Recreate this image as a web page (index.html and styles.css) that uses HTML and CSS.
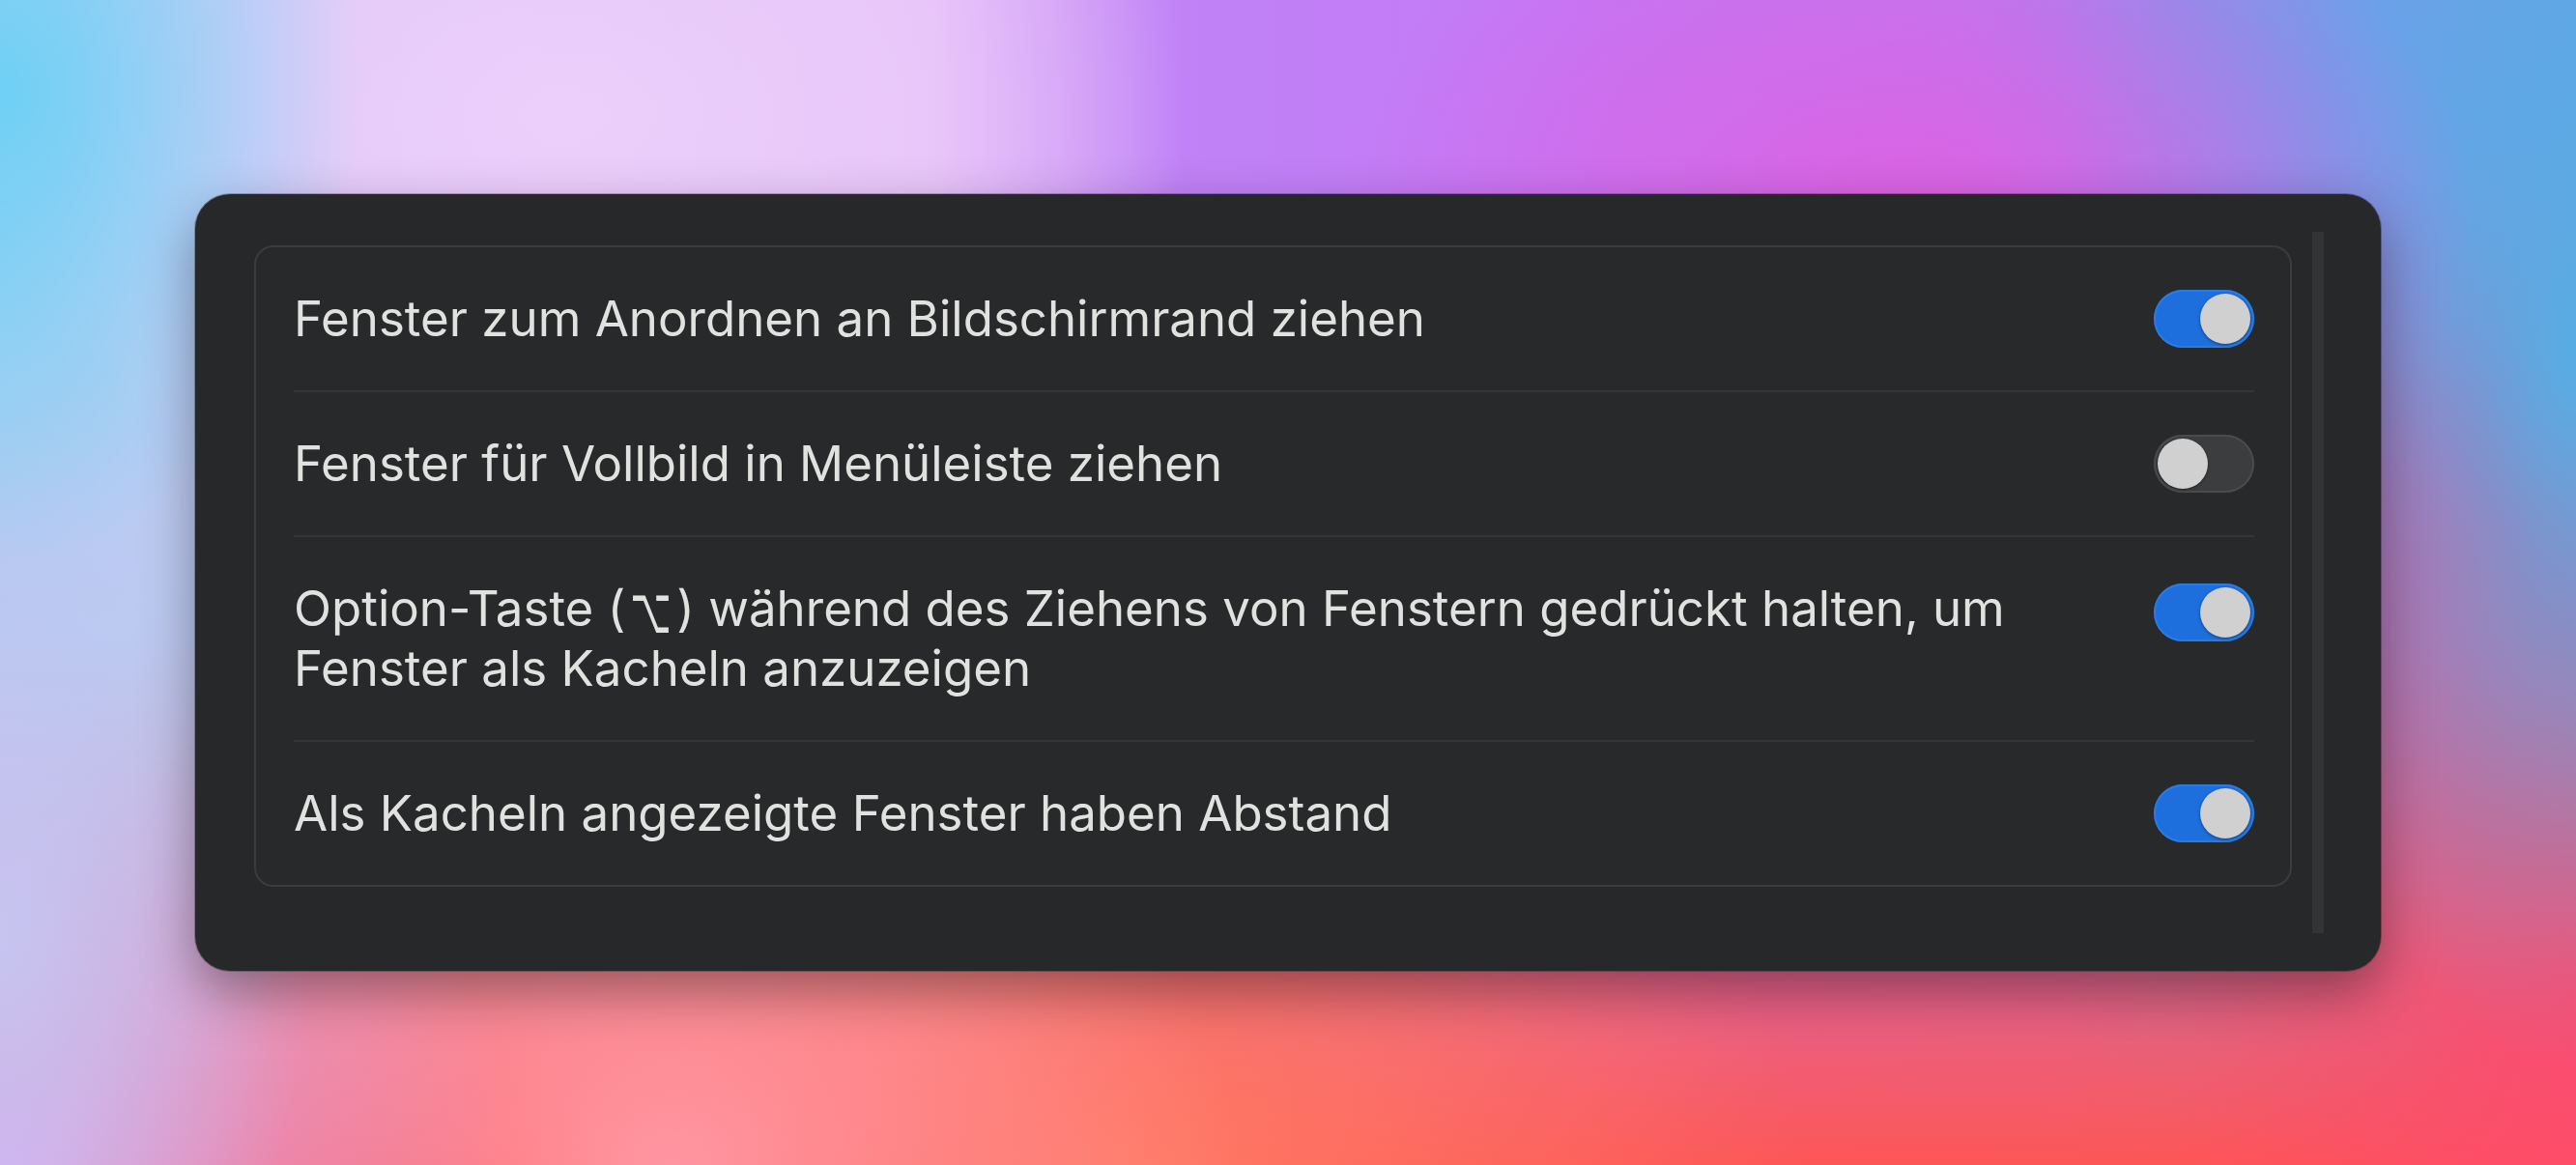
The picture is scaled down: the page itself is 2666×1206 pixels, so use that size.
FILE: index.html
```html
<!DOCTYPE html>
<html lang="de">
<head>
    <meta charset="UTF-8">
    <title>Schreibtisch &amp; Dock</title>
    <link rel="stylesheet" href="styles.css">
</head>
<body>
<div class="window">
    <div class="content">
        <div class="group">
            <div class="row">
                <div class="label">Fenster zum Anordnen an Bildschirmrand ziehen</div>
                <div class="switch on"><div class="knob"></div></div>
            </div>
            <div class="row">
                <div class="label">Fenster für Vollbild in Menüleiste ziehen</div>
                <div class="switch"><div class="knob"></div></div>
            </div>
            <div class="row top">
                <div class="label">Option-Taste (<span class="opt">⌥</span>) während des Ziehens von Fenstern gedrückt halten, um Fenster als Kacheln anzuzeigen</div>
                <div class="switch on"><div class="knob"></div></div>
            </div>
            <div class="row">
                <div class="label">Als Kacheln angezeigte Fenster haben Abstand</div>
                <div class="switch on"><div class="knob"></div></div>
            </div>
        </div>
    </div>
    <div class="track"></div>
</div>
</body>
</html>
```

FILE: styles.css
```css
*{
    margin: 0;
    padding: 0;
    box-sizing: border-box;
}
html, body{
    width: 2666px;
    height: 1206px;
    overflow: hidden;
}
body{
    font-family: Inter, "Noto Sans", "DejaVu Sans", sans-serif;
    padding: 201px 0 0 202px;
    background-color: #f8585e;
    background-image:
        radial-gradient(ellipse 14% 40% at 0% 8%, #6fd0f5 0%, rgba(111,208,245,0) 100%),
        radial-gradient(ellipse 24% 36% at 22% 10%, #edcffb 0%, rgba(237,207,251,0) 100%),
        radial-gradient(ellipse 22% 32% at 74% 18%, #dc62e2 0%, rgba(220,98,226,0) 100%),
        radial-gradient(ellipse 12% 62% at 100% 30%, #56ade4 0%, rgba(86,173,228,0) 100%),
        radial-gradient(ellipse 16% 30% at 92% 4%, #6f9ee8 0%, rgba(111,158,232,0) 100%),
        radial-gradient(ellipse 12% 45% at 0% 80%, #c6c4f0 0%, rgba(198,196,240,0) 100%),
        radial-gradient(ellipse 20% 40% at 0% 100%, #d8a8f2 0%, rgba(216,168,242,0) 100%),
        radial-gradient(ellipse 14% 40% at 0% 60%, #b6c8f0 0%, rgba(182,200,240,0) 100%),
        radial-gradient(ellipse 22% 40% at 26% 100%, #ff96a2 0%, rgba(255,150,162,0) 100%),
        radial-gradient(ellipse 26% 45% at 44% 100%, #ff7a64 0%, rgba(255,122,100,0) 100%),
        radial-gradient(ellipse 16% 55% at 100% 85%, #ff4a6e 0%, rgba(255,74,110,0) 100%),
        radial-gradient(ellipse 16% 35% at 97% 45%, #e2529a 0%, rgba(226,82,154,0) 100%),
        linear-gradient(180deg, rgba(255,88,88,0) 55%, #fd5656 100%),
        linear-gradient(90deg, #a8d2f2 0%, #dcc8f6 14%, #e6c0f8 36%, #c082f6 46%, #c478f6 62%, #b67cf0 80%, #7c98e8 92%, #64a6e6 100%);
}
.window{
    display: flex;
    width: 2262px;
    height: 804px;
    padding: 39px 59px 39px 61px;
    background-color: #272829;
    border-radius: 36px;
    box-shadow: 0 22px 55px rgba(0,0,0,0.38), 0 0 0 1px rgba(0,0,0,0.25);
}
.content{
    flex: 1;
    padding-top: 14px;
}
.group{
    border: 2px solid #3b3c3e;
    border-radius: 20px;
    background-color: #28292b;
}
.row{
    display: flex;
    align-items: center;
    margin: 0 37px 0 39px;
    padding: 44px 0;
}
.row + .row{
    border-top: 2px solid #343537;
}
.row.top{
    align-items: flex-start;
}
.row.top .switch{
    margin-top: 4px;
}
.label{
    flex: 1;
    padding-right: 60px;
    font-size: 51px;
    line-height: 60px;
    color: #e1e2e0;
}
.opt{
    display: inline-block;
    font-family: "DejaVu Sans", sans-serif;
    font-size: 46px;
    transform: scale(0.8, 1.45);
}
.switch{
    flex-shrink: 0;
    width: 104px;
    height: 60px;
    padding: 4px;
    border-radius: 30px;
    background-color: #3c3d3f;
    box-shadow: inset 0 0 0 2px #4a4b4d;
}
.switch.on{
    background-color: #1c6fdc;
    box-shadow: inset 0 0 0 2px #2a7ae0;
}
.knob{
    width: 52px;
    height: 52px;
    border-radius: 50%;
    background-color: #cfd0cf;
    box-shadow: 0 1px 3px rgba(0,0,0,0.45);
}
.switch.on .knob{
    margin-left: 44px;
}
.track{
    width: 12px;
    margin-left: 21px;
    background-color: #333436;
}
```
